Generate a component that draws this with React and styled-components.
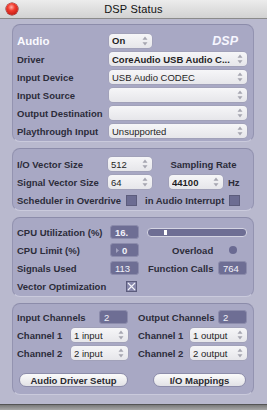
import React from 'react';
import styled, { createGlobalStyle } from 'styled-components';

const Global = createGlobalStyle`
  html, body { margin: 0; padding: 0; }
  body { font-family: "Liberation Sans", Arial, sans-serif; background: #9c9c9c; }
`;

const Window = styled.div`
  width: 267px;
  height: 410px;
  display: flex;
  flex-direction: column;
  background: #b9b9ce;
  overflow: hidden;
`;

const TitleBar = styled.div`
  height: 18px;
  flex: none;
  border-bottom: 1px solid #8a8a8a;
  background: linear-gradient(#ececec, #d2d2d2);
  display: flex;
  align-items: center;
  justify-content: center;
  position: relative;
  font-size: 11px;
  color: #111;
  letter-spacing: 0.2px;
`;

const CloseDot = styled.span`
  position: absolute;
  left: 6px;
  top: 3px;
  width: 12px;
  height: 12px;
  border-radius: 50%;
  background: radial-gradient(circle at 45% 35%, #ffb0a8 0, #f23a2c 35%, #a8100a 100%);
  box-shadow: 0 0 0 0.5px #7a1010;
`;

const Body = styled.div`
  flex: 1;
  display: flex;
  flex-direction: column;
  gap: 6px;
  padding: 5px 0 0 12px;
  border-bottom: 1px solid #555;
`;

const BottomEdge = styled.div`
  height: 5px;
  flex: none;
  background: linear-gradient(#7a7a7a, #a8a8a8);
`;

const Panel = styled.div`
  box-sizing: border-box;
  width: 242px;
  height: ${p => p.$h}px;
  padding: ${p => p.$pt}px 6px 0 4px;
  background: #a8a8c4;
  border: 1px solid #9393b0;
  border-top-color: #8c8caa;
  border-bottom-color: #cacadc;
  border-radius: 8px;
  display: flex;
  flex-direction: column;
`;

const Row = styled.div`
  height: ${p => p.$h || 18}px;
  display: flex;
  align-items: center;
  flex: none;
`;

const Label = styled.div`
  width: ${p => p.$w}px;
  flex: none;
  font-size: 9.5px;
  font-weight: bold;
  color: #2c2c3a;
  white-space: nowrap;
`;

const Heading = styled.div`
  width: 92px;
  flex: none;
  font-size: 11.5px;
  font-weight: bold;
  color: #fafaff;
`;

const DspMark = styled.div`
  margin-left: auto;
  margin-right: 9px;
  font-size: 12.5px;
  font-weight: bold;
  font-style: italic;
  color: #f6f6ff;
`;

const Popup = styled.div`
  box-sizing: border-box;
  width: ${p => p.$w}px;
  height: 14px;
  flex: none;
  margin-left: ${p => p.$ml || 0}px;
  display: flex;
  align-items: center;
  padding: 0 4px 0 3px;
  background: linear-gradient(#f6f6f8, #e6e6ea);
  border-radius: 4px;
  box-shadow: 0 0 0 0.5px #9a9aae;
  font-size: 9.5px;
  font-weight: ${p => (p.$bold ? 'bold' : 'normal')};
  color: #1e1e24;
  white-space: nowrap;
  overflow: hidden;
`;

const PopupText = styled.span`
  flex: 1;
  overflow: hidden;
`;

const DarkBox = styled.div`
  box-sizing: border-box;
  width: 29px;
  height: 14px;
  flex: none;
  margin-left: ${p => p.$ml || 0}px;
  display: flex;
  align-items: center;
  padding-left: 4px;
  background: #6e6e94;
  border: 1px solid #8c8cac;
  border-radius: 3px;
  font-size: 9.5px;
  font-weight: ${p => (p.$bold ? 'bold' : 'normal')};
  color: #f2f2fa;
`;

const Meter = styled.div`
  box-sizing: border-box;
  width: 100px;
  height: 9px;
  margin-left: 8px;
  background: #6e6e94;
  border: 1px solid #d4d4e2;
  border-radius: 4px;
  position: relative;
`;

const MeterTick = styled.span`
  position: absolute;
  left: 16px;
  top: 1px;
  width: 3px;
  height: 5px;
  background: #fff;
`;

const Check = styled.div`
  box-sizing: border-box;
  width: 11px;
  height: 11px;
  flex: none;
  margin-left: ${p => p.$ml || 0}px;
  background: ${p => (p.$on ? '#8686aa' : '#6c6c92')};
  border: 1px solid #5c5c7c;
  display: flex;
  align-items: center;
  justify-content: center;
`;

const Text = styled.div`
  margin-left: ${p => p.$ml || 0}px;
  width: ${p => (p.$w ? `${p.$w}px` : 'auto')};
  text-align: ${p => p.$align || 'left'};
  flex: none;
  font-size: 9.5px;
  font-weight: bold;
  color: #2c2c3a;
  white-space: nowrap;
`;

const Led = styled.span`
  width: 8px;
  height: 8px;
  margin-left: 16px;
  border-radius: 50%;
  background: #6a6a92;
  flex: none;
`;

const Columns = styled.div`
  display: flex;
  gap: 10px;
`;

const Column = styled.div`
  width: ${p => p.$w}px;
  display: flex;
  flex-direction: column;
`;

const ColRow = styled.div`
  height: 18px;
  display: flex;
  align-items: center;
  justify-content: space-between;
`;

const ButtonRow = styled.div`
  margin-top: 11px;
  display: flex;
`;

const Button = styled.div`
  box-sizing: border-box;
  width: ${p => p.$w}px;
  height: 14px;
  margin-left: ${p => p.$ml}px;
  display: flex;
  align-items: center;
  justify-content: center;
  background: linear-gradient(#fbfbfb, #e2e2e6);
  border: 1px solid #8d8daa;
  border-radius: 7px;
  font-size: 9.5px;
  font-weight: bold;
  color: #2a2a30;
`;

const Arrows = () => (
  <svg width="6" height="10" viewBox="0 0 6 10" style={{ flex: 'none' }}>
    <path d="M3 0.5 L5.5 3.8 L0.5 3.8 Z" fill="#a6a6b0" />
    <path d="M3 9.5 L5.5 6.2 L0.5 6.2 Z" fill="#a6a6b0" />
  </svg>
);

const Cross = () => (
  <svg width="9" height="9" viewBox="0 0 9 9">
    <path d="M1 1 L8 8 M8 1 L1 8" stroke="#f4f4fa" strokeWidth="1.1" />
  </svg>
);

function Select({ w, ml, bold, children }) {
  return (
    <Popup $w={w} $ml={ml} $bold={bold}>
      <PopupText>{children}</PopupText>
      <Arrows />
    </Popup>
  );
}

export default function App() {
  return (
    <Window>
      <Global />
      <TitleBar>
        <CloseDot />
        DSP Status
      </TitleBar>
      <Body>
        <Panel $h={118} $pt={6}>
          <Row $h={19}>
            <Heading>Audio</Heading>
            <Select w={43} bold>On</Select>
            <DspMark>DSP</DspMark>
          </Row>
          <Row>
            <Label $w={92}>Driver</Label>
            <Select w={138} bold>CoreAudio USB Audio C...</Select>
          </Row>
          <Row>
            <Label $w={92}>Input Device</Label>
            <Select w={138}>USB Audio CODEC</Select>
          </Row>
          <Row>
            <Label $w={92}>Input Source</Label>
            <Select w={138}></Select>
          </Row>
          <Row>
            <Label $w={92}>Output Destination</Label>
            <Select w={138}></Select>
          </Row>
          <Row>
            <Label $w={92}>Playthrough Input</Label>
            <Select w={138}>Unsupported</Select>
          </Row>
        </Panel>

        <Panel $h={63} $pt={6}>
          <Row>
            <Label $w={91}>I/O Vector Size</Label>
            <Select w={44}>512</Select>
            <Text $ml={8} $w={87} $align="center">Sampling Rate</Text>
          </Row>
          <Row>
            <Label $w={91}>Signal Vector Size</Label>
            <Select w={44}>64</Select>
            <Select w={54} ml={17} bold>44100</Select>
            <Text $ml={5}>Hz</Text>
          </Row>
          <Row $h={19}>
            <Label $w={109}>Scheduler in Overdrive</Label>
            <Check />
            <Text $ml={8} $w={84}>in Audio Interrupt</Text>
            <Check />
          </Row>
        </Panel>

        <Panel $h={80} $pt={5}>
          <Row>
            <Label $w={93}>CPU Utilization (%)</Label>
            <DarkBox $bold>16.</DarkBox>
            <Meter><MeterTick /></Meter>
          </Row>
          <Row>
            <Label $w={93}>CPU Limit (%)</Label>
            <DarkBox $bold>
              <svg width="5" height="7" viewBox="0 0 5 7" style={{ marginRight: 2 }}>
                <path d="M1 1 L4 3.5 L1 6 Z" fill="#a4a4c0" />
              </svg>
              0
            </DarkBox>
            <Text $ml={33}>Overload</Text>
            <Led />
          </Row>
          <Row>
            <Label $w={93}>Signals Used</Label>
            <DarkBox>113</DarkBox>
            <Text $ml={9} $w={70}>Function Calls</Text>
            <DarkBox>764</DarkBox>
          </Row>
          <Row>
            <Label $w={109}>Vector Optimization</Label>
            <Check $on><Cross /></Check>
          </Row>
        </Panel>

        <Panel $h={92} $pt={4}>
          <Columns>
            <Column $w={111}>
              <ColRow>
                <Label>Input Channels</Label>
                <DarkBox>2</DarkBox>
              </ColRow>
              <ColRow>
                <Label>Channel 1</Label>
                <Select w={57}>1 input</Select>
              </ColRow>
              <ColRow>
                <Label>Channel 2</Label>
                <Select w={57}>2 input</Select>
              </ColRow>
            </Column>
            <Column $w={109}>
              <ColRow>
                <Label>Output Channels</Label>
                <DarkBox>2</DarkBox>
              </ColRow>
              <ColRow>
                <Label>Channel 1</Label>
                <Select w={57}>1 output</Select>
              </ColRow>
              <ColRow>
                <Label>Channel 2</Label>
                <Select w={57}>2 output</Select>
              </ColRow>
            </Column>
          </Columns>
          <ButtonRow>
            <Button $w={109} $ml={2}>Audio Driver Setup</Button>
            <Button $w={93} $ml={25}>I/O Mappings</Button>
          </ButtonRow>
        </Panel>
      </Body>
      <BottomEdge />
    </Window>
  );
}
